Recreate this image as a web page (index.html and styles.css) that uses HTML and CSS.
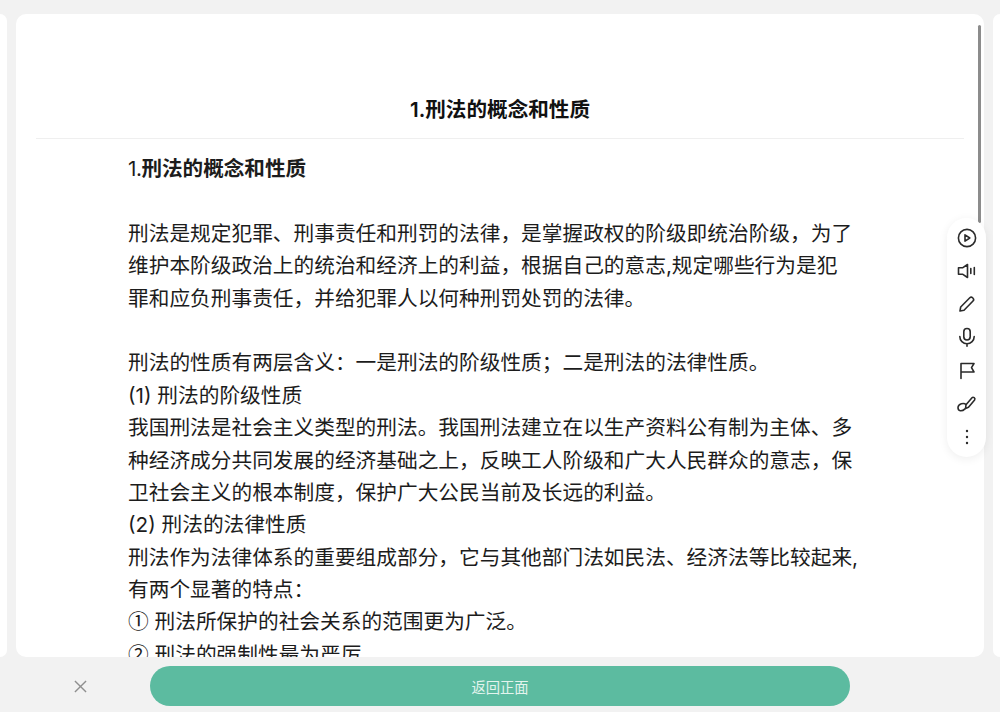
FILE: index.html
```html
<!DOCTYPE html>
<html lang="zh">
<head>
<meta charset="utf-8">
<title>刑法的概念和性质</title>
<link rel="stylesheet" href="styles.css">
</head>
<body>
<main class="pager">
  <div class="side side-left"></div>
  <article class="card">
    <h1 class="title">1.刑法的概念和性质</h1>
    <div class="content">
      <p class="line"><span class="lead">1.</span><strong>刑法的概念和性质</strong></p>
      <p class="line">&nbsp;</p>
      <p class="line">刑法是规定犯罪、刑事责任和刑罚的法律，是掌握政权的阶级即统治阶级，为了</p>
      <p class="line">维护本阶级政治上的统治和经济上的利益，根据自己的意志,规定哪些行为是犯</p>
      <p class="line">罪和应负刑事责任，并给犯罪人以何种刑罚处罚的法律。</p>
      <p class="line">&nbsp;</p>
      <p class="line">刑法的性质有两层含义：一是刑法的阶级性质；二是刑法的法律性质。</p>
      <p class="line">(1) 刑法的阶级性质</p>
      <p class="line">我国刑法是社会主义类型的刑法。我国刑法建立在以生产资料公有制为主体、多</p>
      <p class="line">种经济成分共同发展的经济基础之上，反映工人阶级和广大人民群众的意志，保</p>
      <p class="line">卫社会主义的根本制度，保护广大公民当前及长远的利益。</p>
      <p class="line">(2) 刑法的法律性质</p>
      <p class="line">刑法作为法律体系的重要组成部分，它与其他部门法如民法、经济法等比较起来,</p>
      <p class="line">有两个显著的特点：</p>
      <p class="line"><span class="mark">①</span> 刑法所保护的社会关系的范围更为广泛。</p>
      <p class="line"><span class="mark">②</span> 刑法的强制性最为严厉。</p>
    </div>
    <div class="scrollbar"></div>
  </article>
  <div class="side side-right"></div>
  <nav class="tools">
    <svg class="icon" viewBox="0 0 20 20"><circle cx="10" cy="10" r="8.6"/><path d="M8 6.800v6.400l4.800-3.200z"/></svg>
    <svg class="icon" viewBox="0 0 20 20"><path d="M10.500 3.500v13L5.500 13.200H1.500V6.800h4z"/><path d="M13.800 7.500v5M17.300 6.500v7"/></svg>
    <svg class="icon" viewBox="0 0 20 20"><path d="M3 17l.7-4L12.800 3.800a2 2 0 0 1 2.800 0l.4.400a2 2 0 0 1 0 2.800L7 16.300z"/></svg>
    <svg class="icon" viewBox="0 0 20 20"><rect x="6.800" y="1.500" width="6.400" height="11.500" rx="3.200"/><path d="M2.800 9.500a7.200 7.200 0 0 0 14.400 0M10 16.700v2.500"/></svg>
    <svg class="icon" viewBox="0 0 20 20"><path d="M4 17.500V2.500h13l-2.500 4.200 2.500 4.300H4"/></svg>
    <svg class="icon" viewBox="0 0 20 20"><path d="M9 10.800l6-7c1.200-1.300 3.700.4 2.600 2.200l-6.100 7.300-3 1.200z"/><path d="M9 10.500C7 8.500 1.200 9.500 1 13.500c-.1 3.800 3.800 4.300 7 1.300"/></svg>
    <svg class="icon dots" viewBox="0 0 20 20"><circle cx="10" cy="4" r="1.200"/><circle cx="10" cy="10" r="1.200"/><circle cx="10" cy="16" r="1.200"/></svg>
  </nav>
</main>
<footer class="bar">
  <svg class="close" viewBox="0 0 14 14"><path d="M1 1l12 12M13 1L1 13"/></svg>
  <button class="back">返回正面</button>
</footer>
</body>
</html>
```
FILE: styles.css
```css
* { box-sizing: border-box; margin: 0; padding: 0; }
html, body { height: 100%; }
body {
  width: 1000px;
  height: 712px;
  overflow: hidden;
  background: #f2f2f2;
  font-family: Inter, "Noto Sans CJK SC", "Noto Sans", sans-serif;
  color: #1c1c1c;
  display: flex;
  flex-direction: column;
}
.pager {
  position: relative;
  height: 657px;
  padding-top: 14px;
  display: flex;
  gap: 9px;
}
.side { width: 7px; background: #fff; flex: none; }
.side-left { border-radius: 0 10px 10px 0; }
.side-right { border-radius: 10px 0 0 10px; }
.card {
  position: relative;
  flex: 1;
  background: #fff;
  border-radius: 10px;
  overflow: hidden;
  padding: 0 20px;
}
.title {
  height: 125px;
  padding-top: 80px;
  border-bottom: 1px solid #efefef;
  text-align: center;
  font-size: 20.6px;
  font-weight: 600;
  line-height: 32px;
  color: #111;
}
.content { padding: 14px 92px 0; width: 928px; }
.line { font-size: 20.7px; line-height: 32.4px; height: 32.4px; white-space: nowrap; }
.line strong { font-size: 20.6px; font-weight: 600; }
.lead { letter-spacing: -0.5px; font-weight: 400; }
.mark { font-family: "Noto Sans CJK SC", sans-serif; line-height: 0; }
.scrollbar {
  position: absolute;
  top: 11px;
  right: 3px;
  width: 3px;
  height: 198px;
  background: #8c8c8c;
  border-radius: 2px;
}
.tools {
  position: absolute;
  left: 947px;
  top: 218px;
  width: 39px;
  height: 239px;
  padding: 10px 0;
  background: #fff;
  border-radius: 20px;
  box-shadow: 0 2px 10px rgba(0, 0, 0, .07);
  display: flex;
  flex-direction: column;
  align-items: center;
  justify-content: space-between;
}
.icon {
  width: 20px;
  height: 20px;
  fill: none;
  stroke: #2b2b2b;
  stroke-width: 1.6;
  stroke-linecap: round;
  stroke-linejoin: round;
  flex: none;
}
.dots { fill: #2b2b2b; stroke: none; }
.bar {
  flex: 1;
  position: relative;
  display: flex;
  align-items: center;
  padding: 3px 150px 0;
}
.close {
  position: absolute;
  left: 74px;
  top: 23px;
  width: 13px;
  height: 13px;
  fill: none;
  stroke: #8f8f8f;
  stroke-width: 1.500;
}
.back {
  width: 700px;
  height: 40px;
  border: 0;
  border-radius: 20px;
  background: #5cbba0;
  color: #e3f4ee;
  font-family: inherit;
  font-size: 14.300px;
}
```
